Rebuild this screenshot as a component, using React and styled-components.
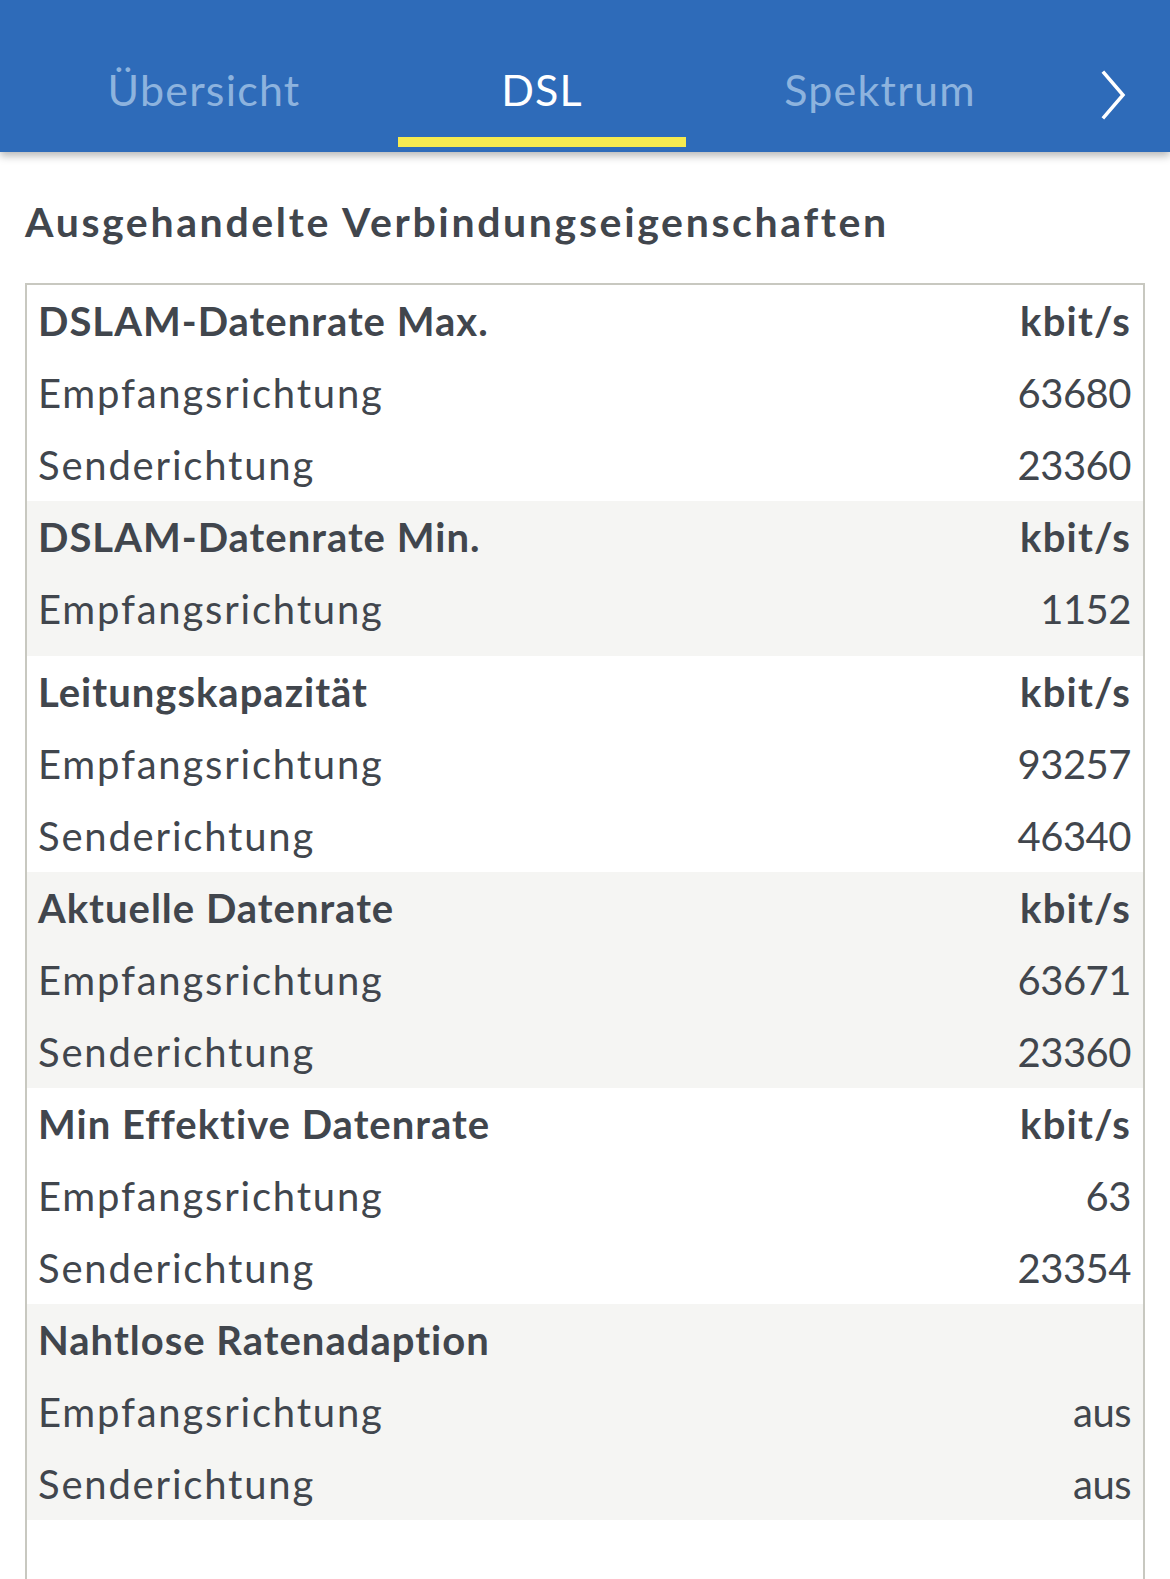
import React from "react";
import styled, { createGlobalStyle } from "styled-components";

const GlobalStyle = createGlobalStyle`
  html, body {
    margin: 0;
    padding: 0;
    background: #ffffff;
    font-family: Lato, "Open Sans", sans-serif;
    color: #41464d;
  }
`;

const Page = styled.div`
  width: 1170px;
  height: 1579px;
  overflow: hidden;
  background: #ffffff;
`;

const Header = styled.header`
  position: relative;
  z-index: 2;
  height: 152px;
  background: #2e6bb9;
  box-shadow: 0 4px 8px rgba(0, 0, 0, 0.28);
  display: flex;
  align-items: stretch;
  padding-left: 35px;
  box-sizing: border-box;
`;

const Tab = styled.div`
  width: 338px;
  display: flex;
  align-items: center;
  justify-content: center;
  position: relative;
  padding-top: 26px;
  box-sizing: border-box;
  font-size: 43px;
  font-weight: 400;
  letter-spacing: 1.2px;
  color: ${(p) => (p.$active ? "#ffffff" : "#8db3de")};

  &::after {
    content: "";
    display: ${(p) => (p.$active ? "block" : "none")};
    position: absolute;
    left: 25px;
    right: 25px;
    bottom: 5px;
    height: 10px;
    background: #f6ea4f;
  }
`;

const Arrow = styled.div`
  flex: 1;
  display: flex;
  align-items: center;
  justify-content: center;
  padding-left: 6px;
  padding-top: 38px;
`;

const Content = styled.main`
  padding: 0 25px;
`;

const Heading = styled.h2`
  margin: 0;
  padding-top: 44px;
  font-size: 41px;
  line-height: 52px;
  font-weight: 700;
  letter-spacing: 2.65px;
  color: #41464d;
`;

const Table = styled.div`
  margin-top: 35px;
  border: 2px solid #c8c8c0;
  border-bottom: none;
  min-height: 1400px;
`;

const Group = styled.div`
  background: ${(p) => (p.$shaded ? "#f5f5f3" : "#ffffff")};
  padding-bottom: ${(p) => p.$extra || 0}px;
`;

const Row = styled.div`
  height: 72px;
  display: flex;
  align-items: center;
  justify-content: space-between;
  padding: 0 12px 0 11px;
  font-size: 40px;
  font-weight: ${(p) => (p.$head ? 700 : 400)};
  color: #41464d;
`;

const Label = styled.span`
  letter-spacing: ${(p) => (p.$head ? "1px" : "1.8px")};
`;

const Value = styled.span`
  letter-spacing: ${(p) => (p.$head ? "1.2px" : "-0.5px")};
`;

const Chevron = () => (
  <svg width="30" height="50" viewBox="0 0 30 50">
    <polyline
      points="6,3 25,25 6,47"
      fill="none"
      stroke="#ffffff"
      strokeWidth="3.5"
      strokeLinecap="square"
    />
  </svg>
);

const groups = [
  {
    title: "DSLAM-Datenrate Max.",
    unit: "kbit/s",
    rows: [["Empfangsrichtung", "63680"], ["Senderichtung", "23360"]],
  },
  {
    title: "DSLAM-Datenrate Min.",
    unit: "kbit/s",
    rows: [["Empfangsrichtung", "1152"]],
    extra: 11,
  },
  {
    title: "Leitungskapazität",
    unit: "kbit/s",
    rows: [["Empfangsrichtung", "93257"], ["Senderichtung", "46340"]],
  },
  {
    title: "Aktuelle Datenrate",
    unit: "kbit/s",
    rows: [["Empfangsrichtung", "63671"], ["Senderichtung", "23360"]],
  },
  {
    title: "Min Effektive Datenrate",
    unit: "kbit/s",
    rows: [["Empfangsrichtung", "63"], ["Senderichtung", "23354"]],
  },
  {
    title: "Nahtlose Ratenadaption",
    unit: "",
    rows: [["Empfangsrichtung", "aus"], ["Senderichtung", "aus"]],
  },
];

export default function App() {
  return (
    <Page>
      <GlobalStyle />
      <Header>
        <Tab>Übersicht</Tab>
        <Tab $active>DSL</Tab>
        <Tab>Spektrum</Tab>
        <Arrow>
          <Chevron />
        </Arrow>
      </Header>
      <Content>
        <Heading>Ausgehandelte Verbindungseigenschaften</Heading>
        <Table>
          {groups.map((g, i) => (
            <Group key={g.title} $shaded={i % 2 === 1} $extra={g.extra}>
              <Row $head>
                <Label $head>{g.title}</Label>
                <Value $head>{g.unit}</Value>
              </Row>
              {g.rows.map(([label, value]) => (
                <Row key={label}>
                  <Label>{label}</Label>
                  <Value>{value}</Value>
                </Row>
              ))}
            </Group>
          ))}
        </Table>
      </Content>
    </Page>
  );
}
